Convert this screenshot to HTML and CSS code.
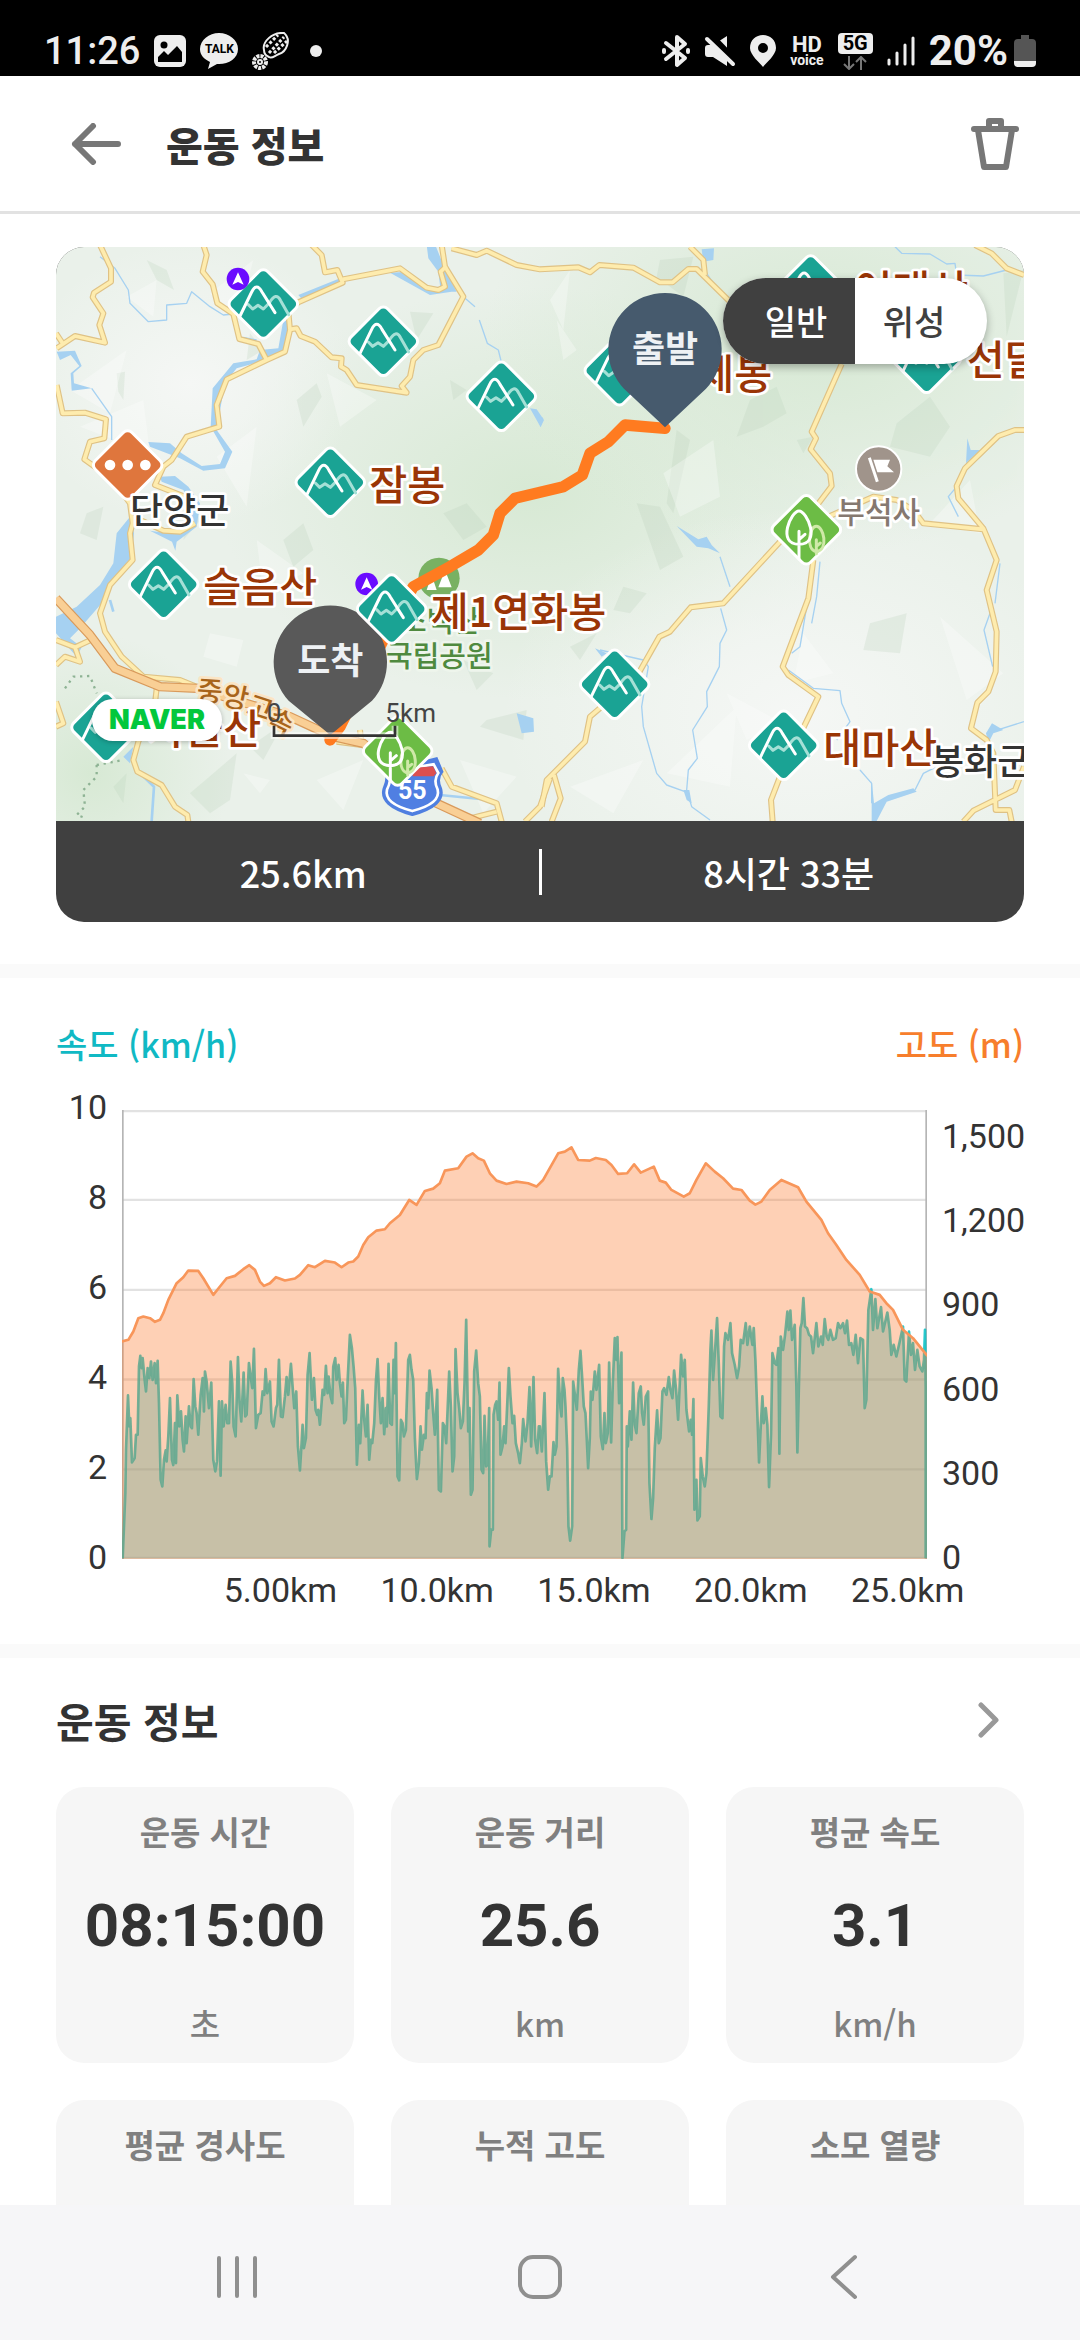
FILE: index.html
```html
<!DOCTYPE html>
<html lang="ko">
<head>
<meta charset="utf-8">
<meta name="viewport" content="width=device-width, initial-scale=1">
<title>운동 정보</title>
<link rel="stylesheet" href="styles.css">
</head>
<body>
<div class="status">
  <div class="status-left">
    <span class="clock">11:26</span>
    <svg width="32" height="32" viewBox="0 0 32 32"><rect width="32" height="32" rx="6" fill="#eee"/><circle cx="10" cy="10" r="3.500"/><path d="M4 27V22L10 16L14 20L23 11L28 17V27Z"/></svg>
    <span class="talk"><svg width="38" height="36" viewBox="0 0 38 36"><path fill="#eee" d="M19 0C29 0 38 7 38 16S29 31 19 31L17 31L8 36L10 29C4 26 0 22 0 16C0 7 9 0 19 0Z"/></svg><b>TALK</b></span>
    <svg width="38" height="38" viewBox="0 0 38 38" fill="none" stroke="#eee"><path stroke-width="2" d="M12 18C10 10 20 0 32 1C40 8 34 20 27 22C22 24 20 27 17 25Q12 23 12 18Z"/><path stroke-width="3" stroke-dasharray="3 2" d="M17 21L32 5M14 15L26 3M22 21L35 9"/><circle cx="8" cy="30" r="6" stroke-width="4" stroke-dasharray="3 1"/><circle cx="8" cy="30" r="2" stroke-width="2"/></svg>
    <span class="dot"></span>
  </div>
  <div class="status-right">
    <svg width="28" height="34" viewBox="0 0 28 34" fill="none" stroke="#eee" stroke-width="4" stroke-linecap="round" stroke-linejoin="round"><path d="M4 9L23 24L15 31V3L23 10L4 25"/><path d="M2 16V18M26 16V18"/></svg>
    <svg width="32" height="32" viewBox="0 0 32 32"><path fill="#eee" d="M4 10H9L23 1V31L9 22H4Q1 22 1 19V13Q1 10 4 10Z"/><path stroke="#000" stroke-width="7" d="M6 0L33 28"/><path stroke="#eee" stroke-width="4" stroke-linecap="round" d="M3 4L29 29"/></svg>
    <svg width="26" height="32" viewBox="0 0 26 32"><path fill="#eee" fill-rule="evenodd" d="M13 0C20 0 26 5 26 13C26 20 16 28 13 32C10 28 0 20 0 13C0 5 6 0 13 0ZM13 8A5 5 0 1 0 13 18A5 5 0 1 0 13 8Z"/></svg>
    <span class="hd"><b>HD</b><i>voice</i></span>
    <span class="net"><b>5G</b><svg width="24" height="14" viewBox="0 0 24 14" fill="none" stroke="#777" stroke-width="2"><path d="M6 0V13M1 8L6 13L11 8M18 14V1M13 6L18 1L23 6"/></svg></span>
    <svg width="28" height="30" viewBox="0 0 28 30" stroke="#eee" stroke-width="3" stroke-linecap="round"><path d="M2 24V28M10 17V28M18 9V28"/><path d="M26 2V28"/></svg>
    <span class="percent">20%</span>
    <svg class="battery" width="22" height="32" viewBox="0 0 22 32"><path fill="#555" d="M7 0H15V4H18Q22 4 22 8V26H0V8Q0 4 4 4H7Z"/><path fill="#eee" d="M0 26H22V28Q22 32 18 32H4Q0 32 0 28Z"/></svg>
  </div>
</div>

<header class="appbar">
  <button class="icon-btn" aria-label="뒤로"><svg width="50" height="42" viewBox="0 0 50 42" fill="none" stroke="#777" stroke-width="6" stroke-linecap="round" stroke-linejoin="round"><path d="M22 3L4 21L22 39M4 21H47"/></svg></button>
  <h1>운동 정보</h1>
  <button class="icon-btn" aria-label="삭제"><svg width="48" height="54" viewBox="0 0 48 54" fill="none" stroke="#777" stroke-width="6" stroke-linejoin="round"><path stroke-linecap="round" d="M3 12H45"/><path d="M18 11V4H30V11M7 13L13 50H35L41 13"/></svg></button>
</header>

<main>
  <section class="route">
    <div class="route-card">
      <div class="map">
        <svg class="map-art" viewBox="18 21 2904 1722" role="img" aria-label="이동 경로 지도">
          <defs>
            <radialGradient id="park"><stop offset="0" stop-color="#d7e9d4"/><stop offset="1" stop-color="#d7e9d4" stop-opacity="0"/></radialGradient>
            <radialGradient id="plain"><stop offset="0" stop-color="#f5f7f5"/><stop offset="1" stop-color="#f5f7f5" stop-opacity="0"/></radialGradient>
            <g id="peak">
              <rect x="-78" y="-78" width="156" height="156" rx="18" transform="rotate(45)" fill="#1aa394" stroke="#fff" stroke-width="9"/>
              <g fill="none" stroke-width="9" stroke-linecap="round" stroke-linejoin="round">
                <path stroke="#a5e0d6" d="M-45 2L-32 15L-16 4L0 15L18 -3Q38 -38 52 -10L76 32"/>
                <path stroke="#fff" d="M-70 36L-35 -36Q-20 -66 -4 -36L35 26"/>
              </g>
            </g>
            <g id="forest">
              <rect x="-78" y="-78" width="156" height="156" rx="18" transform="rotate(45)" fill="#6cbc45" stroke="#fff" stroke-width="9"/>
              <g fill="none" stroke-width="9" stroke-linecap="round">
                <path stroke="#cfe9a8" d="M30 66C-2 60 8 -10 30 -10C52 -10 68 60 30 66M30 30V72M30 50L42 40"/>
                <path stroke="#fff" d="M-22 44C-90 44 -46 -56 -22 -56C2 -56 46 44 -22 44M-22 5V88M-22 30L-4 14"/>
              </g>
            </g>
            <g id="arrow"><circle r="34" fill="#6a0cff"/><path fill="#fff" d="M0 -20L17 17L0 9L-17 17Z"/></g>
            <path id="hw" d="M18 1075L120 1185L195 1285L330 1340L440 1345L720 1430L850 1490L940 1510L1160 1690L1290 1750"/>
          </defs>
          <rect x="18" y="21" width="2904" height="1722" fill="#eaf1ea"/>
          <ellipse cx="1450" cy="760" rx="950" ry="620" fill="url(#park)"/>
          <ellipse cx="2300" cy="300" rx="1000" ry="640" fill="url(#park)"/>
          <ellipse cx="120" cy="1600" rx="420" ry="420" fill="url(#park)"/>
          <ellipse cx="2250" cy="1420" rx="900" ry="620" fill="url(#plain)"/>
          <ellipse cx="420" cy="430" rx="500" ry="430" fill="url(#plain)"/>
          <g fill="#b9cfb9" opacity=".24">
            <path d="M290 60L350 90L372 150L320 120ZM200 400L225 395L220 480L205 455ZM740 480L800 430L815 470L760 560ZM1080 215L1150 220L1100 300ZM420 800L460 830L400 900ZM110 820L160 800L140 900L90 880ZM600 280L640 330L590 360ZM1200 420L1250 450L1210 480Z"/>
            <path d="M1830 60L1930 50L1900 170L1820 110ZM2100 480L2180 440L2210 520L2140 560L2060 590ZM2540 550L2640 470L2700 560L2640 650L2520 620ZM1880 570L1920 600L1870 820L1850 790ZM2860 100L2920 90L2870 290ZM2240 600L2290 590L2260 640ZM1760 790L1830 800L1900 950L1830 990Z"/>
            <path d="M420 1660L560 1540L540 1680L480 1720ZM600 1520L700 1450L640 1560ZM1310 1440L1430 1410L1420 1500L1290 1460ZM1720 1040L1790 1060L1740 1120L1690 1110ZM1640 1180L1590 1260L1560 1220ZM190 1640L230 1600L220 1690ZM2460 1150L2570 1120L2550 1240L2440 1230ZM700 900L760 850L790 930L730 980ZM1180 820L1250 790L1310 860L1240 900ZM1240 1260L1330 1300L1280 1350Z"/>
          </g>
          <g fill="#fff" opacity=".3">
            <path d="M60 450L230 330L180 520ZM480 160L610 60L560 250ZM500 650L620 560L590 800ZM830 400L980 480L870 560ZM620 900L760 1000L640 1060ZM90 560L280 480L300 640ZM230 170L320 120L310 230Z"/>
            <path d="M1520 240L1580 330L1540 360ZM1840 700L1990 600L2010 770L1890 830ZM1500 180L1560 90L1540 270ZM2130 200L2220 130L2240 260ZM2640 850L2760 720L2790 880ZM2260 1180L2350 1300L2230 1330Z"/>
            <path d="M480 1180L580 1200L560 1280L460 1250ZM800 1620L940 1560L880 1710ZM1230 1560L1400 1610L1300 1720ZM1850 1600L2060 1400L2040 1640ZM2030 1360L2200 1450L2090 1500ZM2670 1130L2860 1300L2750 1380ZM1560 1640L1780 1560L1690 1720ZM580 1600L660 1620L630 1660Z"/>
          </g>
          <g fill="#a6d1f1">
            <path d="M745 165L870 115L880 132L760 182ZM1130 15L1156 15L1180 75L1220 155L1205 155L1140 165L1020 98L1060 96L1130 142L1172 152L1165 95L1135 55Z"/>
            <path d="M700 240L720 245L716 290L700 330L650 360L560 385L525 430L512 500L500 570L547 635L525 685L460 692L390 655L300 620L295 606L360 610L395 640L455 678L510 672L525 635L482 560L488 445L550 370L620 358L630 330L685 325Z"/>
            <path d="M330 710L375 708L415 740L450 790L440 860L380 905L376 932L366 905L300 872L370 882L410 860L430 810L400 750L335 725ZM240 830L252 880L245 950L180 1030L155 1090L90 1165L60 1195L95 1222L80 1250L18 1180V1130L80 1100L150 1035L190 970L200 880Z"/>
            <path d="M20 335L75 332L95 378L70 400L72 430L125 445L65 452L62 400L88 378L62 345L30 360ZM1440 505L1460 508L1482 540L1472 562ZM1955 28L1992 25L1990 60L1960 65ZM1465 520L1480 535L1470 560ZM2752 595L2762 630L2790 630L2748 670ZM1880 858L1945 898L1970 890L1985 915L2010 940L1975 925L1940 920ZM1400 1420L1450 1435L1452 1475L1415 1480ZM220 1550L250 1520L240 1570ZM2808 1480L2826 1450L2860 1470L2830 1480L2815 1510ZM2465 1620L2472 1690L2515 1665L2590 1645L2600 1655L2510 1685L2480 1743H2465ZM1635 1225L1670 1240L1655 1250ZM1900 1650L1918 1650L1925 1690L1910 1680Z"/>
          </g>
          <g fill="none" stroke="#a6d1f1" stroke-width="4" stroke-linejoin="round">
            <path d="M150 50L195 85L235 150L240 190L295 245L350 240V195L410 190L425 155L480 200L520 225L550 222M125 445L185 530V600M1240 170L1275 200M1288 240L1312 310L1345 330L1355 370M580 292L620 300"/>
            <path d="M2535 20L2555 40L2640 42L2690 72L2715 70L2720 105L2800 108L2870 90M2720 740L2695 770L2725 830M1970 100L2010 160M2310 965L2300 1070L2285 1150M2275 1070L2250 1220L2225 1240M2215 1290L2290 1345L2370 1352L2375 1390L2400 1445L2360 1500M2430 1590L2465 1630V1690M2595 1650L2620 1600L2680 1570M2810 1480L2922 1445M2850 970L2835 1090M2820 1120L2802 1170L2828 1280"/>
            <path d="M2012 1105L2030 1170L2010 1210L2008 1280L1970 1355L1972 1400L1928 1470L1942 1555L1915 1590L1910 1650L1925 1700L1980 1740M2010 950L2040 1040M1650 1230L1780 1260L1795 1280L1775 1400L1780 1460L1820 1600L1850 1635L1905 1655"/>
            <path stroke-width="8" d="M250 1560L270 1600L312 1640L305 1743M1170 1665L1320 1680M180 1080L190 1115"/>
          </g>
          <path d="M45 1345L70 1310L120 1308L140 1360M140 1575L140 1610L100 1650L105 1700L80 1725L110 1735M140 1575L220 1560" fill="none" stroke="#8eb394" stroke-width="7" stroke-dasharray="7 14"/>

          <g fill="none" stroke-linejoin="round">
            <g stroke="#dfc285" stroke-width="18">
              <path id="r1" d="M150 15L183 85V125L132 158L128 172L160 220L148 255L165 308L75 288L20 325M18 280L38 310M460 15L470 45L458 95L488 133L502 190L550 222L568 297L625 312L650 360M20 435L38 520L105 518L168 538L163 595L120 605L103 658L190 720L240 790L248 850L240 880L248 960L180 1035L150 1120L165 1175L215 1250L280 1310L390 1320L440 1340M785 15L815 45L825 97L862 90L878 128L745 187L715 215L720 270L705 335L650 360L530 418L500 495L508 560L410 590L365 660L340 680L315 735L430 780M435 850L390 875L340 872L250 830"/>
              <path id="r2" d="M720 268L740 265L752 288L795 305L845 352L875 355L873 380L890 390L920 435L1070 458L1055 438L1080 410L1090 360L1120 330L1165 315L1240 170L1185 80L1175 15M878 118L1050 85L1130 143L1165 150L1185 140L1172 95L1190 78M1205 25L1280 45L1310 32L1400 75L1470 88L1585 82L1620 97L1648 75L1750 83L1830 127H1868L1915 87H1940L2050 195M1920 20L1960 60L1965 105M2375 372L2285 575L2298 595L2282 628L2340 700L2345 738L2260 850L2190 905L2020 1090L1922 1102L1860 1175L1828 1190L1760 1310L1620 1430L1605 1505L1490 1620L1475 1700M1512 1605L1532 1675L1505 1745"/>
              <path id="r3" d="M2775 15L2825 40L2870 85L2922 105M2922 570H2895L2845 588L2745 685L2720 738L2725 775L2800 865L2840 960L2810 1050L2840 1175L2837 1295L2815 1355L2782 1388L2763 1465L2810 1500L2830 1540L2837 1710H2878L2885 1745M2340 828L2470 770L2540 780L2590 810L2620 850L2800 868M2922 1580L2895 1650L2770 1712L2740 1745M2290 960L2275 1075L2198 1280L2215 1305L2305 1370L2190 1610L2163 1680L2168 1745M18 1200L75 1222L122 1200M75 1222L90 1265L45 1250L18 1275M18 1385L40 1450L18 1460M320 1345L315 1390L265 1505L250 1560L262 1595L335 1635L375 1700L412 1725L415 1745M1175 1585L1205 1640L1340 1690L1355 1745M1340 1715L1260 1735M1500 1615L1470 1700L1425 1745M860 1505L935 1515L930 1470"/>
            </g>
            <g stroke="#feecae" stroke-width="11"><use href="#r1"/><use href="#r2"/><use href="#r3"/></g>
            <use href="#hw" stroke="#d99a5b" stroke-width="28"/>
            <use href="#hw" stroke="#f9cf95" stroke-width="21"/>
          </g>
          <g class="lbl road">
            <text x="440" y="1384" transform="rotate(4 475 1360)">중</text><text x="518" y="1402" transform="rotate(12 555 1375)">앙</text><text x="592" y="1434" transform="rotate(18 630 1405)">고</text><text x="652" y="1476" transform="rotate(26 690 1450)">속</text>
          </g>
          <g transform="translate(1087 1645)">
            <path fill="#4f7fe0" stroke="#4f7fe0" stroke-width="10" d="M72 -88L88 -50Q70 -30 84 0Q100 50 0 78Q-100 50 -84 0Q-70 -30 -80 -50Z"/>
            <path fill="#507fe2" stroke="#fff" stroke-width="8" d="M64 -72L78 -46Q62 -24 76 4Q86 46 0 68Q-86 46 -76 4Q-62 -24 -68 -50Z"/>
            <path fill="#dc4f50" d="M10 -62L62 -66L72 -46L64 -36H0Z"/>
            <text class="shield" text-anchor="middle" y="31">55</text>
          </g>
          <circle cx="1167" cy="1015" r="62" fill="#79b162"/><path fill="#fff" d="M1145 1005L1160 1050H1130ZM1185 990L1205 1042H1165Z"/>
          <g class="lbl green"><text x="1050" y="1176">소백산</text><text x="1008" y="1281">국립공원</text></g>
          <path fill="none" stroke="#ff7b20" stroke-width="34" stroke-linecap="round" stroke-linejoin="round" d="M1845 565L1725 555L1675 605L1620 640L1597 705L1540 740L1395 775L1350 820L1330 885L1285 930L1200 980L1090 1040L1010 1180L870 1460L840 1500"/>
          <g class="lbl mount">
            <text x="958" y="779">잠봉</text><text x="460" y="1086">슬음산</text><text x="1142" y="1161">제1연화봉</text><text x="2320" y="1569">대마산</text><text x="2750" y="406">선달산</text><text x="1825" y="446">형제봉</text><text x="2413" y="196">어래산</text><text x="292" y="1513">자을산</text>
          </g>
          <use href="#peak" x="640" y="192"/><use href="#peak" x="1000" y="304"/><use href="#peak" x="1354" y="469"/><use href="#peak" x="841" y="727"/><use href="#peak" x="341" y="1033"/><use href="#peak" x="2282" y="150"/><use href="#peak" x="1708" y="392"/><use href="#peak" x="2630" y="355"/><use href="#peak" x="168" y="1462"/><use href="#peak" x="1694" y="1333"/><use href="#peak" x="2201" y="1516"/>
          <use href="#forest" x="2269" y="869"/><use href="#forest" x="1043" y="1533"/>
          <g transform="translate(233 675)"><rect x="-78" y="-78" width="156" height="156" rx="18" transform="rotate(45)" fill="#df763d" stroke="#fff" stroke-width="9"/><g fill="#fff"><circle cx="-53" r="16"/><circle r="16"/><circle cx="53" r="16"/></g></g>
          <g transform="translate(2486 687)"><circle r="68" fill="#a0948b" stroke="#fff" stroke-width="6"/><path d="M-28 -34L-4 38" stroke="#fff" stroke-width="9"/><path fill="#fff" d="M-16 -28H34L26 -8L46 10H-4Z"/></g>
          <use href="#arrow" x="564" y="117"/><use href="#arrow" x="950" y="1032"/>
          <g class="lbl town"><text x="240" y="851">단양군</text><text x="2643" y="1604">봉화군</text></g>
          <g class="lbl temple"><text x="2362" y="848">부석사</text></g>
          <path fill="#595959" d="M841 1485L716 1382A170 170 0 1 1 966 1382Z"/>
          <use href="#peak" x="1025" y="1107"/>
          <path fill="#465a6d" d="M1845 562L1722 446A170 170 0 1 1 1968 446Z"/>
          <g class="pin"><text x="1845" y="366">출발</text><text x="841" y="1302">도착</text></g>
          <path fill="none" stroke="#fff" stroke-width="20" opacity=".55" d="M672 1457V1487H1035V1457"/>
          <path fill="none" stroke="#333" stroke-width="8" d="M672 1457V1487H1035V1457"/>
          <g class="scale"><text x="672" y="1446">0</text><text x="1082" y="1446">5km</text></g>
        </svg>
        <div class="map-type"><button class="on">일반</button><button>위성</button></div>
        <span class="naver">NAVER</span>
      </div>
      <div class="totals"><span>25.6km</span><span>8시간 33분</span></div>
    </div>
  </section>

  <section class="chart">
    <div class="legend"><span class="speed">속도 (km/h)</span><span class="alt">고도 (m)</span></div>
    <div class="plot-row">
      <div class="axis left"><span>10</span><span>8</span><span>6</span><span>4</span><span>2</span><span>0</span></div>
      <svg class="plot" viewBox="246 -510 2416 1348" preserveAspectRatio="none" role="img" aria-label="거리별 속도와 고도">
        <defs>
          <path id="spd" d="M248 836L256 640L258 510L264 347L268 440L271 415L276 548L284 535L288 465L293 465L297 260L301 228L305 265L308 235L314 300L318 335L323 265L328 295L333 245L338 300L344 250L348 310L353 243L357 370L362 600L367 620L372 540L377 512L380 545L385 470L390 355L396 540L400 556L405 430L408 550L412 347L418 440L423 395L428 480L432 515L437 410L440 490L447 380L452 440L456 445L461 298L466 380L470 400L475 465L482 345L488 295L492 395L495 275L500 305L507 385L514 308L520 540L526 575L531 545L537 365L542 588L546 365L551 440L557 375L562 430L567 430L572 245L577 310L581 440L587 470L594 232L599 370L604 425L611 278L616 410L620 405L627 250L632 290L637 325L642 207L648 445L655 405L662 400L668 335L673 345L677 268L682 340L690 305L695 425L701 440L708 385L712 375L717 240L723 410L728 412L735 350L740 292L745 345L753 252L758 320L763 385L769 335L774 500L780 572L785 490L788 435L792 505L798 475L803 285L809 220L816 360L822 295L827 390L832 405L835 390L840 435L848 330L853 345L858 258L863 340L866 290L872 350L877 370L880 260L886 235L890 300L896 255L900 310L905 350L909 308L913 430L918 420L924 285L930 165L936 205L941 260L946 325L951 555L957 435L961 490L968 332L973 420L978 470L983 375L988 540L993 480L997 490L1003 430L1008 305L1013 238L1018 350L1023 430L1028 355L1033 463L1038 385L1041 440L1046 252L1051 430L1056 435L1061 240L1064 340L1068 190L1073 590L1078 602L1083 420L1088 430L1092 470L1098 450L1105 240L1110 225L1115 270L1120 300L1125 475L1131 598L1137 550L1142 440L1146 510L1152 465L1157 475L1161 340L1165 385L1169 272L1175 325L1180 400L1185 465L1192 330L1197 630L1203 635L1209 430L1214 440L1219 490L1228 275L1233 380L1238 575L1243 530L1247 208L1253 340L1258 385L1263 445L1269 425L1274 310L1279 120L1285 455L1289 385L1293 645L1298 630L1303 275L1309 212L1315 310L1320 350L1325 570L1330 580L1334 408L1339 560L1343 555L1348 385L1349 800L1354 750L1359 750L1361 405L1366 375L1370 365L1375 420L1379 308L1382 525L1388 500L1393 440L1397 490L1407 265L1412 350L1418 430L1423 408L1428 490L1435 520L1440 550L1446 490L1450 418L1457 485L1463 430L1469 322L1474 500L1481 292L1486 480L1492 520L1497 440L1500 440L1506 515L1514 340L1519 545L1525 630L1530 590L1535 590L1541 487L1545 525L1550 500L1555 267L1562 385L1565 410L1569 295L1574 330L1577 380L1582 505L1586 740L1591 783L1597 740L1600 305L1606 350L1611 390L1617 270L1622 213L1628 310L1632 380L1637 400L1641 480L1645 565L1650 475L1653 335L1658 360L1665 275L1670 330L1678 255L1683 470L1689 508L1694 400L1698 490L1704 460L1708 248L1714 488L1719 310L1725 175L1730 240L1733 172L1738 370L1745 218L1748 835L1754 755L1759 750L1761 440L1764 500L1770 395L1775 480L1780 308L1785 435L1790 460L1797 340L1803 320L1807 400L1812 435L1818 350L1825 335L1829 610L1835 718L1840 655L1845 505L1852 392L1857 490L1862 475L1868 335L1873 325L1880 345L1887 292L1892 330L1898 355L1903 272L1909 330L1915 420L1924 225L1930 290L1935 240L1940 390L1948 455L1953 420L1957 465L1961 358L1964 690L1970 600L1973 722L1980 710L1983 535L1989 590L1995 620L2000 580L2007 380L2012 210L2015 152L2020 300L2026 210L2032 115L2037 250L2042 410L2048 415L2053 200L2057 160L2065 180L2072 130L2077 220L2085 255L2092 295L2098 260L2103 180L2110 190L2118 130L2123 195L2130 140L2138 195L2142 145L2147 240L2152 380L2158 548L2163 440L2168 350L2172 430L2178 385L2183 435L2188 622L2194 460L2198 220L2205 250L2210 255L2216 205L2219 522L2223 170L2230 210L2236 165L2243 95L2247 150L2252 92L2257 180L2265 135L2270 320L2273 518L2277 340L2282 145L2286 130L2291 55L2296 140L2302 145L2308 165L2314 170L2320 220L2330 130L2336 200L2344 170L2349 195L2355 118L2361 170L2366 180L2372 150L2380 180L2388 175L2395 130L2402 145L2410 130L2416 160L2422 122L2428 195L2435 190L2441 225L2448 165L2455 250L2462 175L2470 180L2475 385L2480 360L2486 90L2495 28L2500 150L2507 58L2513 145L2524 82L2530 155L2543 98L2550 150L2555 225L2562 195L2570 230L2578 195L2590 140L2595 300L2600 305L2608 155L2614 225L2620 190L2626 270L2633 210L2640 260L2648 275L2653 240L2656 150L2658 320V836"/>
          <path id="ele" d="M236 1055L246 1055L265 1050L280 1025L295 985L310 980L330 985L345 996L360 990L370 970L385 930L410 880L430 862L445 842L475 843L490 865L520 915L540 890L560 865L585 858L610 838L628 826L645 840L660 875L672 888L690 880L708 862L735 872L765 866L780 855L805 826L825 832L855 813L885 818L905 832L925 818L940 815L955 800L970 765L985 742L1010 722L1035 718L1050 700L1080 675L1108 630L1130 645L1155 603L1180 596L1200 580L1215 542L1255 535L1280 500L1298 490L1315 505L1332 512L1350 550L1370 572L1400 582L1430 575L1465 580L1490 590L1510 570L1555 490L1575 485L1595 472L1615 510L1650 512L1668 504L1698 510L1715 525L1735 552L1762 550L1783 523L1803 548L1842 530L1860 572L1878 578L1895 600L1932 620L1950 610L1970 570L1998 520L2025 545L2050 565L2080 596L2105 600L2130 632L2147 644L2165 635L2190 600L2225 570L2275 592L2300 635L2345 690L2365 730L2390 765L2420 810L2460 855L2490 905L2520 915L2540 940L2560 960L2590 1020L2620 1045L2662 1097H2680V1720H236Z"/>
        </defs>
        <path fill="none" stroke="#e2e2e2" stroke-width="7" d="M246 -507H2662M246 -240H2662M246 30H2662M246 299H2662M246 569H2662M246 835H2662"/>
        <path fill="none" stroke="#b5b5b5" stroke-width="6" d="M248 -510V838M2660 -510V838"/>
        <use href="#spd" fill="#1cbec8" fill-opacity=".38"/>
        <use href="#spd" fill="none" stroke="#04c0c3" stroke-width="8" stroke-opacity=".85" stroke-linejoin="round"/>
        <g transform="translate(0 -870)">
          <use href="#ele" fill="#fb7e32" fill-opacity=".36"/>
          <use href="#ele" fill="none" stroke="#f8965a" stroke-width="8" stroke-linejoin="round"/>
        </g>
      </svg>
      <div class="axis right"><span>1,500</span><span>1,200</span><span>900</span><span>600</span><span>300</span><span>0</span></div>
    </div>
    <div class="axis bottom"><span>5.00km</span><span>10.0km</span><span>15.0km</span><span>20.0km</span><span>25.0km</span></div>
  </section>

  <section class="info">
    <div class="info-head"><h2>운동 정보</h2><button class="more" aria-label="더 보기"><svg width="22" height="36" viewBox="0 0 22 36" fill="none" stroke="#999" stroke-width="5" stroke-linecap="round" stroke-linejoin="round"><path d="M3 3L18 18L3 33"/></svg></button></div>
    <div class="cards">
      <div class="card"><span class="name">운동 시간</span><strong>08:15:00</strong><span class="unit">초</span></div>
      <div class="card"><span class="name">운동 거리</span><strong>25.6</strong><span class="unit">km</span></div>
      <div class="card"><span class="name">평균 속도</span><strong>3.1</strong><span class="unit">km/h</span></div>
      <div class="card"><span class="name">평균 경사도</span></div>
      <div class="card"><span class="name">누적 고도</span></div>
      <div class="card"><span class="name">소모 열량</span></div>
    </div>
  </section>
</main>

<nav class="sysnav">
  <button aria-label="최근 앱"><svg width="48" height="48" viewBox="0 0 48 48" stroke="#8f8f8f" stroke-width="4" stroke-linecap="round"><path d="M6 5V43M24 5V43M42 5V43"/></svg></button>
  <button aria-label="홈"><svg width="48" height="48" viewBox="0 0 48 48" fill="none" stroke="#8f8f8f" stroke-width="4"><rect x="4" y="4" width="40" height="40" rx="13"/></svg></button>
  <button aria-label="뒤로"><svg width="48" height="48" viewBox="0 0 48 48" fill="none" stroke="#8f8f8f" stroke-width="4" stroke-linecap="round" stroke-linejoin="round"><path d="M36 4L14 24L36 44"/></svg></button>
</nav>
</body>
</html>
```
FILE: styles.css
```css
* { box-sizing: border-box; }
body {
  margin: 0;
  height: 100vh;
  display: flex;
  flex-direction: column;
  background: #fff;
  color: #333;
  font-family: "Noto Sans CJK KR", sans-serif;
}
button { margin: 0; padding: 0; border: 0; background: none; color: inherit; font: inherit; }
svg { display: block; flex: none; }

/* system status bar */
.status {
  flex: none;
  height: 76px;
  padding: 26px 44px 0;
  display: flex;
  justify-content: space-between;
  align-items: center;
  background: #000;
  color: #eee;
  font-family: Roboto, sans-serif;
}
.status-left, .status-right { display: flex; align-items: center; gap: 14px; }
.clock { font-size: 38px; line-height: 50px; font-weight: 500; }
.percent { font-size: 42px; line-height: 50px; font-weight: 700; }
.battery { margin-left: -8px; }
.talk { position: relative; }
.talk b { position: absolute; inset: 0; color: #000; font-size: 12px; line-height: 32px; font-weight: 700; text-align: center; }
.dot { width: 12px; height: 12px; margin-left: 6px; border-radius: 50%; background: #eee; }
.hd { display: flex; flex-direction: column; align-items: center; }
.hd b { font-size: 22px; line-height: 18px; font-weight: 700; }
.hd i { font-size: 14px; line-height: 12px; font-style: normal; font-weight: 700; }
.net { display: flex; flex-direction: column; align-items: center; gap: 2px; }
.net b { padding: 0 5px; border-radius: 4px; background: #eee; color: #000; font-size: 20px; line-height: 21px; }

/* app bar */
.appbar {
  flex: none;
  height: 138px;
  padding: 0 61px 0 71px;
  display: flex;
  align-items: center;
  border-bottom: 3px solid #e2e2e2;
}
.appbar h1 { flex: 1; margin: 0 0 0 45px; font-size: 40px; line-height: 60px; font-weight: 900; }

main { flex: 1; min-height: 0; overflow-y: auto; scrollbar-width: none; }

/* route map */
.route { padding: 33px 56px 42px; border-bottom: 14px solid #fafafa; }
.route-card { overflow: hidden; border-radius: 28px; background: #404040; }
.map { position: relative; }
.map-art { width: 100%; height: auto; }
.lbl { paint-order: stroke; stroke: #fff; stroke-width: 16px; stroke-linejoin: round; font-family: "Noto Sans CJK KR", sans-serif; font-weight: 500; }
.mount { fill: #9a3506; font-size: 124px; }
.town { fill: #333; font-size: 108px; }
.temple { fill: #857870; font-size: 90px; }
.green { fill: #4f8a3f; stroke: #eef5ec; font-size: 87px; }
.road { fill: #a8641a; stroke: #fbe5c4; font-size: 84px; }
.shield { fill: #fff; font: 700 75px Roboto, sans-serif; }
.pin { fill: #eef1f4; font: 700 108px "Noto Sans CJK KR", sans-serif; text-anchor: middle; }
.scale { fill: #444; font: 400 78px Roboto, sans-serif; text-anchor: middle; }
.map-type {
  position: absolute;
  top: 31px;
  right: 37px;
  display: flex;
  overflow: hidden;
  border-radius: 43px;
  background: #fff;
  box-shadow: 0 3px 8px rgba(0, 0, 0, .3);
}
.map-type button { width: 132px; height: 86px; padding-right: 14px; color: #404040; font-size: 34px; line-height: 48px; font-weight: 500; }
.map-type .on { padding: 0 0 0 14px; background: #404040; color: #fff; }
.naver {
  position: absolute;
  left: 36px;
  bottom: 80px;
  width: 130px;
  border-radius: 21px;
  background: #fff;
  box-shadow: 0 1px 5px rgba(0, 0, 0, .25);
  color: #03c73c;
  font: 900 27px/42px Inter, sans-serif;
  text-align: center;
}
.totals { display: flex; align-items: center; height: 101px; color: #fff; font-size: 36px; font-weight: 500; }
.totals span { flex: 1; padding-left: 12px; line-height: 46px; text-align: center; }
.totals span + span { border-left: 3px solid #fff; }

/* speed and altitude chart */
.chart { padding: 40px 56px 34px; border-bottom: 14px solid #fafafa; }
.legend { display: flex; justify-content: space-between; font-size: 34px; line-height: 52px; font-weight: 500; }
.speed { color: #10b9c4; }
.alt { color: #f77e2c; }
.axis { color: #333; font: 400 34px/40px Roboto, sans-serif; }
.plot-row { display: flex; align-items: flex-end; margin-top: 17px; }
.axis.left, .axis.right { display: flex; flex-direction: column; justify-content: space-between; margin-bottom: -18px; }
.axis.left { width: 51px; height: 490px; margin-right: 15px; text-align: right; }
.axis.right { width: 82px; height: 461px; margin-left: 15px; }
.plot { flex: 1; min-width: 0; height: 449px; }
.axis.bottom { display: flex; padding: 11px 38px 0 146px; }
.axis.bottom span { flex: 1; text-align: center; }

/* workout figures */
.info { padding: 32px 56px; }
.info-head { display: flex; justify-content: space-between; align-items: center; }
.info-head h2 { margin: 0; font-size: 41px; line-height: 60px; font-weight: 700; }
.more { padding: 0 24px; }
.cards { display: grid; grid-template-columns: repeat(3, 1fr); gap: 37px; margin-top: 37px; }
.card { display: flex; flex-direction: column; align-items: center; height: 276px; padding-top: 20px; border-radius: 28px; background: #f6f6f6; }
.card .name { color: #808080; font-size: 33px; line-height: 48px; font-weight: 700; }
.card strong { margin-top: 27px; font: 700 60px/88px Roboto, sans-serif; }
.card .unit { margin-top: 29px; color: #808080; font-size: 33px; line-height: 48px; font-weight: 500; }

/* system navigation */
.sysnav { flex: none; display: flex; height: 135px; padding: 0 85px; background: #f6f6f8; }
.sysnav button { flex: 1; display: flex; justify-content: center; align-items: center; padding-top: 8px; }
```
